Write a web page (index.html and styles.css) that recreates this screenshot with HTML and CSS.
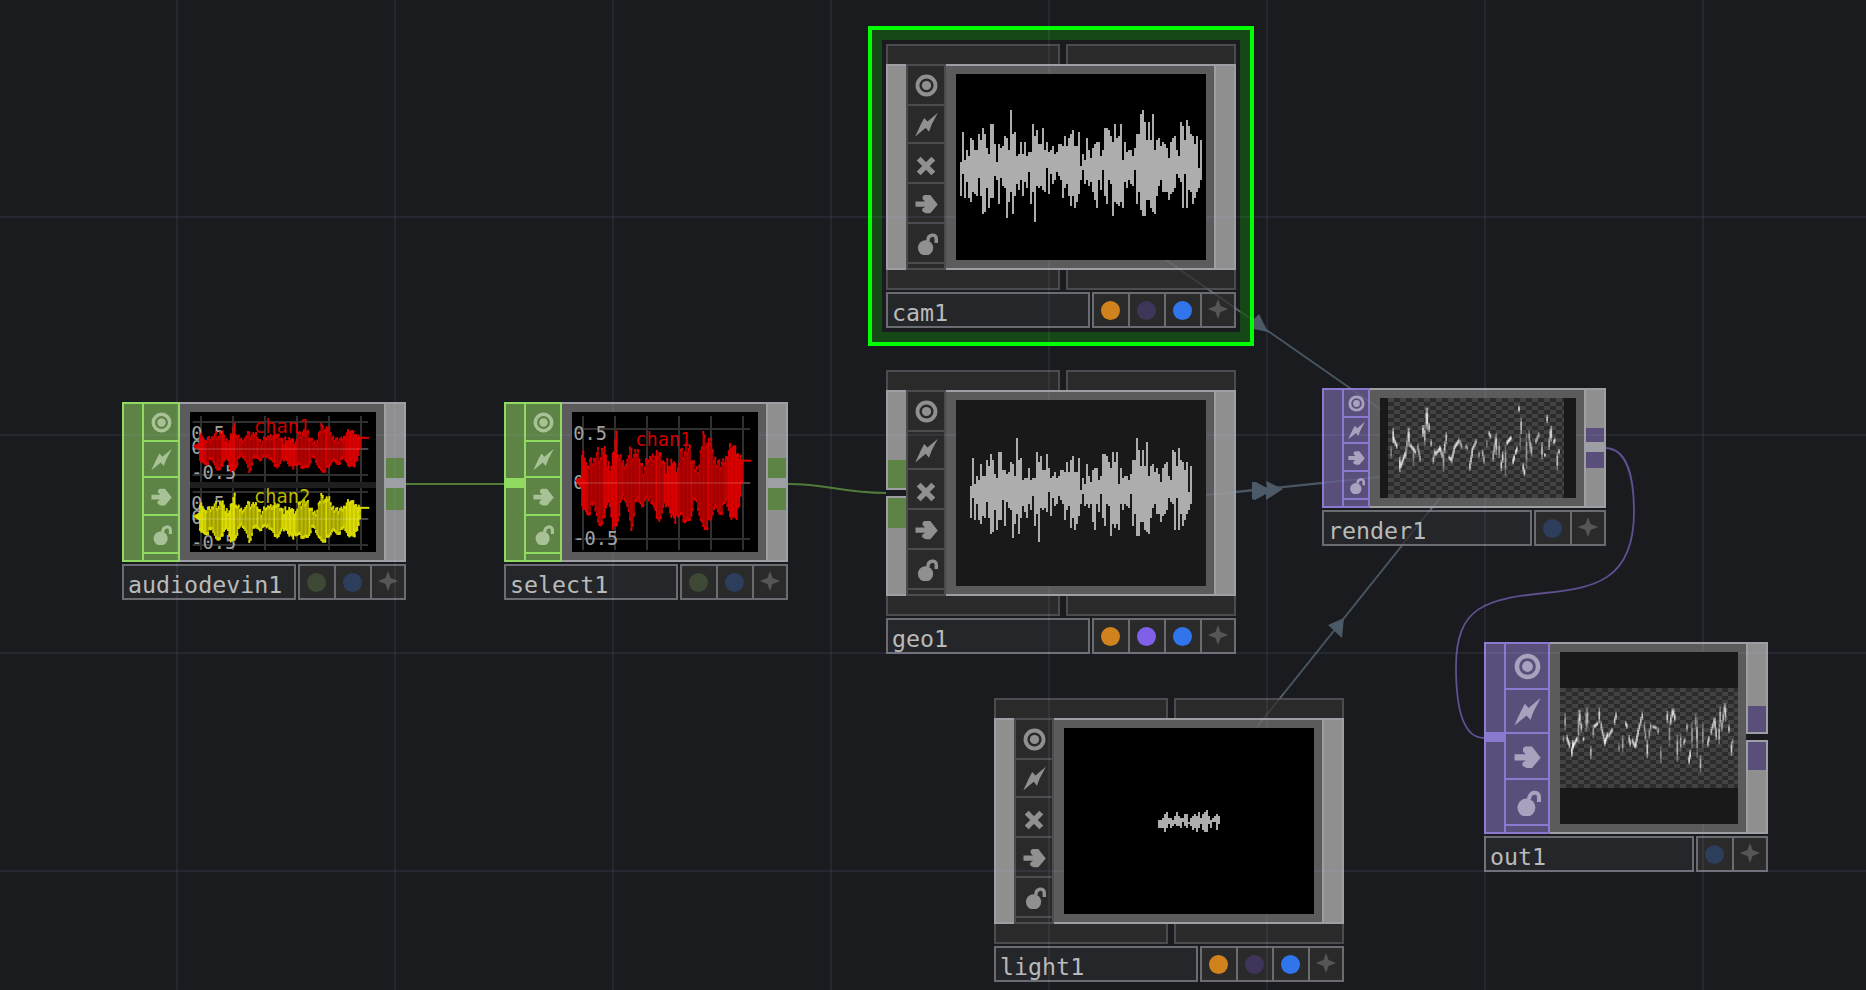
FILE: index.html
```html
<!DOCTYPE html>
<html lang="en">
<head>
<meta charset="utf-8">
<title>Network editor</title>
<link rel="stylesheet" href="styles.css">
</head>
<body>
<svg class="defs" width="0" height="0">
  <symbol id="ring" viewBox="0 0 24 24"><circle cx="12" cy="12" r="9.4" fill="none" stroke="currentColor" stroke-width="4"/><circle cx="12" cy="12" r="4.8" fill="currentColor"/></symbol>
  <symbol id="bolt" viewBox="0 0 24 24"><path d="M23.8-.2 17.4 12 14.6 19.5 11.2 15.5.2 24.6 6 12 9.6 5.2 13 8.8z" fill="currentColor"/></symbol>
  <symbol id="cross" viewBox="0 0 24 24"><path d="M4 4 20 20M20 4 4 20" stroke="currentColor" stroke-width="6"/></symbol>
  <symbol id="arrow" viewBox="0 0 24 24"><path d="M.5 10H10.500L8 7.500V4.500L10 3.200h6L23.700 13l-7.700 9.200H11l-3.500-2V17.500l3-2H.5z" fill="currentColor"/></symbol>
  <symbol id="lock" viewBox="0 0 24 24"><circle cx="11" cy="16.500" r="8" fill="currentColor"/><path d="M13.500 9.500C13 2.500 22 1 22.200 7V11.500" fill="none" stroke="currentColor" stroke-width="3.600"/></symbol>
  <symbol id="star" viewBox="0 0 24 24"><path d="M12 1 14.800 8.700 23 12l-8.200 3.300L12 23 9.200 15.300 1 12l8.200-3.300z" fill="currentColor"/></symbol>
</svg>

<main class="canvas">
  <svg class="wires" viewBox="0 0 1866 990">
    <g class="chop-wire"><path d="M406 484H504M788 484C830 484 840 493 886 493"/></g>
    <path class="top-wire" d="M1606 448C1626 449 1634 475 1634 512C1634 582 1592 588 1545 593C1486 599 1456 606 1456 667C1456 712 1464 738 1484 738"/>
    <g class="ref-wire"><path d="M1166 260 1380 409M1257 727 1440 498"/><path class="thick" d="M1206 495 1380 477"/></g>
  </svg>

  <section class="node chop audiodevin">
    <div class="body">
      <div class="strip in"></div>
      <div class="tools"><i><svg><use href="#ring"/></svg></i><i><svg><use href="#bolt"/></svg></i><i><svg><use href="#arrow"/></svg></i><i><svg><use href="#lock"/></svg></i><i></i></div>
      <div class="view"><svg class="screen" id="plot-a" viewBox="240 66 558 420"></svg></div>
      <div class="strip out"><b class="port"></b><b class="link"></b><b class="port second"></b></div>
    </div>
    <div class="label"><span class="name">audiodevin1</span><span class="flags"><i><b class="dot green-off"></b></i><i><b class="dot blue-off"></b></i><i><svg><use href="#star"/></svg></i></span></div>
  </section>

  <section class="node chop select">
    <div class="body">
      <div class="strip in"><b class="joint"></b></div>
      <div class="tools"><i><svg><use href="#ring"/></svg></i><i><svg><use href="#bolt"/></svg></i><i><svg><use href="#arrow"/></svg></i><i><svg><use href="#lock"/></svg></i><i></i></div>
      <div class="view"><svg class="screen" id="plot-b" viewBox="246 66 558 420"></svg></div>
      <div class="strip out"><b class="port"></b><b class="link"></b><b class="port second"></b></div>
    </div>
    <div class="label"><span class="name">select1</span><span class="flags"><i><b class="dot green-off"></b></i><i><b class="dot blue-off"></b></i><i><svg><use href="#star"/></svg></i></span></div>
  </section>

  <div class="selection"></div>
  <section class="node comp cam">
    <div class="tabs"><i></i><i></i></div>
    <div class="body">
      <div class="strip in"></div>
      <div class="tools"><i><svg><use href="#ring"/></svg></i><i><svg><use href="#bolt"/></svg></i><i><svg class="small"><use href="#cross"/></svg></i><i><svg><use href="#arrow"/></svg></i><i><svg><use href="#lock"/></svg></i><i></i></div>
      <div class="view"><svg class="screen" id="wave-cam" viewBox="956 74 250 186"></svg></div>
      <div class="strip out"></div>
    </div>
    <div class="tabs bottom"><i></i><i></i></div>
    <div class="label"><span class="name">cam1</span><span class="flags"><i><b class="dot orange"></b></i><i><b class="dot purple-off"></b></i><i><b class="dot blue"></b></i><i><svg><use href="#star"/></svg></i></span></div>
  </section>

  <section class="node comp geo">
    <div class="tabs"><i></i><i></i></div>
    <div class="body">
      <div class="strip in"><b class="port"></b><b class="gap"></b><b class="port second"></b></div>
      <div class="tools"><i><svg><use href="#ring"/></svg></i><i><svg><use href="#bolt"/></svg></i><i><svg class="small"><use href="#cross"/></svg></i><i><svg><use href="#arrow"/></svg></i><i><svg><use href="#lock"/></svg></i><i></i></div>
      <div class="view"><svg class="screen" id="wave-geo" viewBox="956 400 250 186"></svg></div>
      <div class="strip out"></div>
    </div>
    <div class="tabs bottom"><i></i><i></i></div>
    <div class="label"><span class="name">geo1</span><span class="flags"><i><b class="dot orange"></b></i><i><b class="dot purple"></b></i><i><b class="dot blue"></b></i><i><svg><use href="#star"/></svg></i></span></div>
  </section>

  <section class="node comp light">
    <div class="tabs"><i></i><i></i></div>
    <div class="body">
      <div class="strip in"></div>
      <div class="tools"><i><svg><use href="#ring"/></svg></i><i><svg><use href="#bolt"/></svg></i><i><svg class="small"><use href="#cross"/></svg></i><i><svg><use href="#arrow"/></svg></i><i><svg><use href="#lock"/></svg></i><i></i></div>
      <div class="view"><svg class="screen" id="wave-light" viewBox="1064 728 250 186"></svg></div>
      <div class="strip out"></div>
    </div>
    <div class="tabs bottom"><i></i><i></i></div>
    <div class="label"><span class="name">light1</span><span class="flags"><i><b class="dot orange"></b></i><i><b class="dot purple-off"></b></i><i><b class="dot blue"></b></i><i><svg><use href="#star"/></svg></i></span></div>
  </section>

  <section class="node top render">
    <div class="body">
      <div class="strip in"></div>
      <div class="tools"><i><svg><use href="#ring"/></svg></i><i><svg><use href="#bolt"/></svg></i><i><svg><use href="#arrow"/></svg></i><i><svg><use href="#lock"/></svg></i><i></i></div>
      <div class="view"><svg class="screen" id="tex-render" viewBox="210 84 588 300"></svg></div>
      <div class="strip out"><b class="port"></b><b class="link"></b><b class="port second"></b></div>
    </div>
    <div class="label"><span class="name">render1</span><span class="flags"><i><b class="dot blue-off"></b></i><i><svg><use href="#star"/></svg></i></span></div>
  </section>

  <section class="node top outnode">
    <div class="body">
      <div class="strip in"><b class="joint"></b></div>
      <div class="tools"><i><svg><use href="#ring"/></svg></i><i><svg><use href="#bolt"/></svg></i><i><svg><use href="#arrow"/></svg></i><i><svg><use href="#lock"/></svg></i><i></i></div>
      <div class="view"><svg class="screen" id="tex-out" viewBox="360 276 534 516"></svg></div>
      <div class="strip out"><b class="port"></b><b class="gap"></b><b class="port second"></b></div>
    </div>
    <div class="label"><span class="name">out1</span><span class="flags"><i><b class="dot blue-off"></b></i><i><svg><use href="#star"/></svg></i></span></div>
  </section>

  <div class="grid"></div>
  <svg class="wires over" viewBox="0 0 1866 990">
    <path class="ghost" d="M1166 260 1254 321M1350 388 1380 409M1257 727 1284 693M1402 545 1440 498M1206 495 1236 492M1322 483 1380 477"/>
    <path class="heads" d="M1259 314 1268 332 1254 329V319zM1252 482 1256 482 1267 488 1266 481 1283 489 1266 500V494L1255 500 1252 499zM1328 625 1344 618 1342 638z"/>
  </svg>
</main>
<script src="script.js"></script>
</body>
</html>
```
FILE: styles.css
```css
body {
  margin: 0;
  background: #1a1b1f;
}

.defs {
  position: absolute;
}

.canvas {
  position: relative;
  width: 1866px;
  height: 990px;
  overflow: hidden;
  background: #1a1b1f;
}

.canvas i,
.canvas b {
  display: block;
  box-sizing: border-box;
}

.grid {
  position: absolute;
  inset: 0;
  z-index: 2;
  background-image:
    linear-gradient(90deg, rgba(180, 180, 255, 0.075) 2px, transparent 2px),
    linear-gradient(rgba(180, 180, 255, 0.075) 2px, transparent 2px);
  background-size: 218px 218px;
  background-position: 176px 0, 0 216px;
}

.wires {
  position: absolute;
  inset: 0;
  width: 1866px;
  height: 990px;
  fill: none;
}

.wires.over { z-index: 2; }
.chop-wire { stroke: #517b38; stroke-width: 2; }
.top-wire { stroke: #5f5092; stroke-width: 1.8; }
.ref-wire { stroke: #485662; stroke-width: 1.9; }
.thick { stroke-width: 2.4; }
.ghost { stroke: rgba(170, 205, 230, 0.12); stroke-width: 1.8; }
.heads { fill: #4c5a67; }

.selection {
  position: absolute;
  left: 868px;
  top: 26px;
  box-sizing: border-box;
  width: 386px;
  height: 320px;
  border: 4px solid #00ff00;
  box-shadow: inset 0 0 0 10px #164717;
}

.node {
  position: absolute;
  width: 284px;
  --line: #9e9ea5;
  --strip: #8f8f8f;
  --rim: var(--line);
  --fill: var(--strip);
  --cell: #2a2a2a;
  --ink: #909090;
}

.chop { --rim: #90da62; --fill: #5d8444; --cell: #5d8444; --ink: #a9c196; --port: #5d8444; --toolline: #90da62; --icon: 21px; }
.top { --rim: #8b79cf; --fill: #594f7a; --cell: #594f7a; --ink: #aaa1bf; --port: #594f7a; --toolline: #8b79cf; }
.comp { width: 350px; --port: #5d8444; --toolline: #4b4b50; --icon: 23px; }
.render { --icon: 17px; }
.outnode { --icon: 27px; }

.audiodevin { left: 122px; top: 402px; }
.select { left: 504px; top: 402px; }
.cam { left: 886px; top: 44px; }
.geo { left: 886px; top: 370px; }
.light { left: 994px; top: 698px; }
.render { left: 1322px; top: 388px; }
.outnode { left: 1484px; top: 642px; }

.tabs {
  display: flex;
  gap: 6px;
  height: 20px;
}

.tabs i {
  width: 174px;
  border: 2px solid #4b4b50;
  border-bottom: 0;
  background: #2a2a2a;
}

.tabs i + i { width: 170px; }
.tabs.bottom i { border: 2px solid #4b4b50; border-top: 0; }

.body {
  display: flex;
  height: 160px;
}

.comp .body { height: 206px; }
.render .body { height: 120px; }
.outnode .body { height: 192px; }

.strip {
  box-sizing: border-box;
  width: 20px;
  border: 2px solid var(--rim);
  border-right: 0;
  background: var(--fill);
}

.strip.out {
  width: 22px;
  border: 2px solid var(--line);
  background: var(--strip);
}

.port { background: var(--port); }
.link { height: 10px; background: var(--line); }
.chop .port { height: 20px; margin-top: 54px; }
.chop .port.second { height: 22px; margin-top: 0; }
.render .port { height: 14px; margin-top: 38px; }
.render .port.second { height: 16px; margin-top: 0; }
.outnode .port { height: 26px; margin-top: 62px; }
.outnode .port.second { height: 28px; margin-top: 0; }
.geo .port { height: 28px; margin-top: 68px; }
.geo .port.second { height: 30px; margin-top: 0; }

.gap {
  height: 10px;
  margin: 0 -2px;
  border: solid var(--line);
  border-width: 2px 0;
  background: #1a1b1f;
}

.geo .gap { margin-right: 0; }
.joint { height: 10px; margin-top: 74px; background: var(--rim); }
.outnode .joint { margin-top: 88px; }

.tools {
  display: grid;
  box-sizing: border-box;
  width: 38px;
  gap: 2px;
  padding: 2px;
  grid-template-rows: 36px 34px 36px 36px 6px;
  background: var(--toolline);
}

.comp .tools { width: 40px; grid-template-rows: 38px 36px 38px 38px 38px 4px; }
.render .tools { width: 28px; grid-template-rows: 26px 24px 26px 26px 6px; }
.outnode .tools { width: 46px; grid-template-rows: 44px 42px 44px 44px 6px; }

.tools i {
  display: flex;
  align-items: center;
  justify-content: center;
  background: var(--cell);
  color: var(--ink);
}

.tools svg {
  width: var(--icon);
  height: var(--icon);
  overflow: visible;
}

.tools .small { width: 22px; height: 22px; margin-top: 5px; }

.view {
  flex: 1;
  border: solid var(--line);
  border-width: 2px 0;
  padding: 8px 8px 8px 10px;
  background: #5b5b5b;
}

.screen {
  display: block;
  position: relative;
  z-index: 3;
  width: 100%;
  height: 100%;
  background: #000;
}

.geo .screen,
.top .screen { background: #191919; }

.label {
  display: flex;
  gap: 2px;
  height: 36px;
  margin-top: 2px;
}

.name {
  flex: 1;
  box-sizing: border-box;
  border: 2px solid #6b6c71;
  padding-left: 4px;
  background: #252629;
  color: #b9baba;
  font: 23.3px/38px "DejaVu Sans Mono", monospace;
}

.flags {
  display: flex;
  gap: 2px;
  padding: 2px;
  background: #6b6c71;
}

.flags i {
  display: flex;
  align-items: center;
  justify-content: center;
  width: 34px;
  background: #2a2a2a;
}

.flags i:last-child { width: 32px; }
.flags svg { width: 22px; height: 22px; color: #565656; margin-top: -2px; }

.dot {
  width: 19px;
  height: 19px;
  border-radius: 50%;
  margin: 1px 2px 0 0;
}

.green-off { background: #3e4935; }
.blue-off { background: #2d3d5c; }
.purple-off { background: #3f3558; }
.orange { background: #d0831c; }
.purple { background: #8060e8; }
.blue { background: #3075ec; }

.plot-text { font: 56px "DejaVu Sans Mono", monospace; }
```
FILE: script.js
```js
// Peak table of the audio block: 121 columns, thirds of a pixel.
const tops = [186,96,180,150,168,114,120,150,150,102,120,84,102,144,162,72,72,132,186,132,144,138,108,114,150,30,102,96,168,162,126,162,126,168,156,156,72,108,90,132,132,84,150,126,156,150,138,162,153,132,132,138,108,138,114,102,90,138,138,96,198,162,180,114,150,174,144,132,126,126,168,150,84,84,90,108,126,72,114,108,72,180,126,156,150,150,168,144,102,102,42,30,66,122,66,122,42,150,120,114,138,126,132,144,174,126,114,108,150,168,66,78,120,60,78,102,108,132,108,204,120];
const bots = [288,222,294,246,294,306,276,282,290,234,290,342,336,264,324,294,294,228,240,312,234,258,264,354,306,276,342,288,252,270,240,288,246,264,216,312,276,366,258,264,258,270,276,204,282,222,252,240,216,228,240,294,264,252,288,318,290,324,306,282,240,210,252,240,258,246,276,300,324,240,270,210,288,312,240,252,348,306,312,318,306,324,246,264,240,252,258,210,312,276,330,348,348,300,300,324,336,342,288,258,240,276,276,276,300,282,276,264,222,234,246,324,222,324,270,276,312,294,276,264,240];

function wave(id, x0, count, y0, scale) {
  let d = "";
  for (let i = 0; i < count; i++) {
    const k = Math.round(i * (tops.length - 1) / (count - 1));
    const a = Math.round((y0 + tops[k] / 3 * scale) / 2) * 2;
    const b = Math.round((y0 + bots[k] / 3 * scale) / 2) * 2;
    d += `M${x0 + 2 * i} ${a}h2V${b}h-2z`;
  }
  document.getElementById(id).innerHTML = `<path d="${d}" fill="#adadad" shape-rendering="crispEdges"/>`;
}
wave("wave-cam", 960, 121, 100, 1);
wave("wave-geo", 970, 111, 428.7, 0.93);
wave("wave-light", 1158, 31, 807, 0.215);

// Channel envelope, relative to a zero line at 278.
const upper = "276,186 284,188 286,210 292,228 298,200 306,212 312,205 318,178 325,176 330,212 338,165 345,165 350,225 356,215 362,232 370,180 380,125 386,200 392,200 398,212 412,212 418,165 424,178 430,190 440,180 446,178 452,210 460,238 466,225 470,190 478,212 484,192 492,192 498,186 504,182 510,188 516,195 522,215 528,240 532,205 540,218 548,205 556,222 562,232 568,225 572,165 580,185 588,165 594,175 600,168 606,205 612,218 618,230 626,230 634,170 640,122 646,145 652,155 660,148 666,142 672,200 680,210 690,212 700,212 708,200 714,175 720,165 726,158 730,180 736,148 740,190 746,200 752,195 762,205";
const lower = "756,290 750,360 744,370 738,385 732,370 724,390 716,370 708,350 700,360 692,370 684,362 676,350 670,375 664,405 656,405 650,415 642,412 634,395 626,380 618,345 610,345 604,375 598,390 590,390 582,412 574,385 568,395 562,362 556,395 550,375 542,385 536,360 528,365 520,345 514,375 508,392 500,385 494,360 486,362 480,340 474,318 466,320 460,352 452,350 444,345 436,352 430,380 426,430 418,375 412,350 406,345 400,335 394,345 388,370 382,400 376,405 368,418 360,360 354,352 348,370 340,380 334,405 328,408 320,385 312,360 304,360 296,372 290,365 282,360 276,356";
const parse = s => s.split(" ").map(p => p.split(",").map(Number));
const up = parse(upper), low = parse(lower).reverse();

function sample(points, x) {
  for (let i = 1; i < points.length; i++) {
    const [x0, y0] = points[i - 1], [x1, y1] = points[i];
    if (x <= x1) return y0 + (y1 - y0) * (x - x0) / (x1 - x0);
  }
  return points[points.length - 1][1];
}

function channel(dx, zero, scale, bright, dim) {
  const jag = [8, -6, 14, 0, -4, 18, 2, -8, 10, -2, 16];
  let out = "";
  for (let x = 276, i = 0; x < 758; x += 4, i++) {
    const a = sample(up, x), b = sample(low, x);
    const hot = (x > 345 && x < 384) || (x > 520 && x < 566) || x > 712 || x < 290;
    const fill = hot || i % 13 === 4 ? bright : i % 3 === 1 ? `color-mix(in srgb, ${bright} 35%, ${dim})` : dim;
    const ta = zero + (a + jag[i % 11] - 278) * scale, tb = zero + (b - jag[(i * 3) % 11] - 278) * scale;
    out += `<path d="M${x + dx} ${ta}V${tb}" stroke="${fill}" stroke-width="5"/><path d="M${x + dx} ${ta}v9M${x + dx} ${tb}v-9" stroke="${bright}" stroke-width="5"/>`;
  }
  return out + `<path d="M${254 + dx} ${zero - 8}l24 -14v${30 * scale + 14}z" fill="${bright}"/>
  <path d="M${746 + dx} ${zero - 67 * scale}h38" stroke="${bright}" stroke-width="6"/>
  <path d="M${254 + dx} ${zero}h528" stroke="#fff" stroke-opacity=".16" stroke-width="5"/>`;
}

function rules(xs, ys, x1, x2, y1, y2) {
  return `<path d="${xs.map(x => `M${x} ${y1}V${y2}`).join("")}${ys.map(y => `M${x1} ${y}H${x2}`).join("")}" stroke="#303030" stroke-width="6"/>`;
}
const txt = (x, y, s, c) => `<text class="plot-text" x="${x}" y="${y}" fill="${c}">${s}</text>`;
const grey = "#a2a2a2";

document.getElementById("plot-b").innerHTML =
  rules([279, 375, 471, 567, 663, 759], [117, 279, 447], 254, 780, 78, 480) +
  txt(250, 150, "0.5", grey) + txt(250, 298, "0", grey) + txt(250, 466, "-0.5", grey) +
  channel(0, 279, 1, "#dc0000", "#ac0000") + txt(436, 167, "chan1", "#d00000");

document.getElementById("plot-a").innerHTML =
  rules([273, 369, 465, 561, 657, 753], [96, 177, 255, 306, 387, 465], 248, 774, 78, 480) +
  `<rect x="240" y="276" width="558" height="18" fill="#1e1e1e"/>` +
  txt(244, 149, "0.5", grey) + txt(244, 191, "0", grey) + txt(244, 268, "-0.5", grey) +
  txt(244, 359, "0.5", grey) + txt(244, 401, "0", grey) + txt(244, 478, "-0.5", grey) +
  channel(-6, 177, .5, "#dc0000", "#ac0000") + txt(432, 130, "chan1", "#c80000") +
  channel(-6, 387, .5, "#dcdc00", "#b0ae00") + txt(432, 340, "chan2", "#b8b800");

// Rendered textures: checkerboard and bright line fragments, split into vertical runs.
function texture(id, x, y, w, h, strokes) {
  const lines = strokes.map(([a, b, c, d, o]) => {
    const n = Math.max(1, Math.round(Math.abs(c - a) / 4));
    let s = "";
    for (let i = 0; i < n; i++) {
      const px = a + (c - a) * (i + .5) / n;
      const y0 = b + (d - b) * i / n, y1 = b + (d - b) * (i + 1) / n;
      const up = Math.min(y0, y1) - 5, dn = Math.max(y0, y1) + 5, q = (dn - up) / 4;
      s += `<path d="M${px} ${up}V${dn}" stroke="#fff" stroke-opacity="${o * .55}" stroke-width="5"/><path d="M${px} ${up + q}V${dn - q}" stroke="#fff" stroke-opacity="${o * .7}" stroke-width="4.500"/>`;
    }
    return s;
  }).join("");
  document.getElementById(id).innerHTML =
    `<pattern id="p-${id}" x="${x}" y="${y}" width="36" height="24" patternUnits="userSpaceOnUse"><rect width="36" height="24" fill="#2c2c2c"/><path d="M0 0h18v12H0zM18 12h18v12H18z" fill="#434343"/></pattern>
    <rect x="${x}" y="${y}" width="${w}" height="${h}" fill="url(#p-${id})"/>${lines}`;
}

texture("tex-render", 234, 84, 528, 300, [
  [243,232,244,262,.35],[249,178,250,215,.85],[250,205,262,232,.8],[267,302,272,265,.9],[272,290,286,250,.8],[286,262,296,180,.5],[296,178,298,225,.8],
  [300,225,318,248,.7],[310,235,311,285,.35],[322,225,332,272,.5],[338,195,340,170,.9],[342,222,351,118,.6],[351,118,353,175,.9],[357,165,358,180,.8],[363,212,364,226,.6],
  [368,278,376,240,.6],[376,252,392,235,.8],[388,230,398,260,.6],[399,302,402,240,.5],[402,245,411,190,.7],[416,262,424,270,.8],[424,275,434,232,.7],[434,232,448,210,.8],[450,215,456,232,.5],
  [466,228,474,236,.5],[478,298,488,240,.75],[486,240,500,212,.6],[506,250,508,260,.5],[516,242,524,278,.55],[530,228,531,214,.35],[536,188,543,202,.7],[548,270,558,205,.6],[560,195,558,250,.7],[568,220,567,260,.5],
  [572,298,580,250,.8],[585,312,588,230,.5],[590,220,604,202,.9],[608,278,614,258,.9],[616,250,622,234,.8],[627,112,627,120,.95],[633,148,634,188,.7],[632,190,630,240,.25],[638,285,645,314,.85],
  [648,290,651,195,.45],[656,185,662,240,.55],[664,225,665,255,.6],[676,218,688,190,.55],[694,262,698,222,.7],[704,254,705,256,.8],[711,140,712,154,.8],[716,235,722,180,.6],[722,172,726,210,.8],[730,218,736,208,.7],[740,295,744,250,.7],[746,242,748,248,.8]
]);

texture("tex-out", 360, 384, 534, 300, [
  [370,545,371,530,.35],[375,465,376,505,.5],[380,530,390,560,.8],[394,585,400,545,.95],[398,560,412,535,.8],[414,545,417,455,.5],[417,455,422,490,.8],[424,490,424,512,.7],[430,535,431,539,.8],[436,510,441,448,.45],[441,448,444,500,.6],
  [453,592,452,562,.6],[458,530,462,500,.5],[462,500,474,490,.8],[476,448,480,485,.8],[482,490,496,555,.65],[494,548,504,522,.9],[506,528,518,508,.7],[522,490,530,460,.75],[536,570,538,555,.4],[548,572,548,530,.5],[556,488,562,502,.7],
  [566,530,572,556,.7],[576,540,586,560,.7],[586,560,596,508,.8],[596,508,609,460,.7],[612,490,618,540,.45],[621,590,623,545,.8],[626,530,634,492,.5],[638,500,650,504,.6],[652,505,657,520,.5],[663,605,662,565,.4],
  [681,458,683,485,.8],[687,555,690,490,.4],[690,490,699,450,.8],[699,450,706,480,.8],[710,600,714,530,.6],[720,525,724,570,.5],[730,550,736,540,.6],[740,495,742,510,.6],[746,608,752,575,.9],[754,560,758,490,.45],[765,465,772,540,.4],[772,475,771,590,.4],
  [783,632,780,590,.6],[788,490,789,560,.4],[802,555,808,532,.7],[812,520,824,478,.7],[824,478,830,535,.7],[836,548,842,445,.6],[844,510,855,435,.6],[855,435,858,480,.7],[866,498,868,515,.7],[873,582,876,550,.8],[876,548,880,542,.5]
]);
```
